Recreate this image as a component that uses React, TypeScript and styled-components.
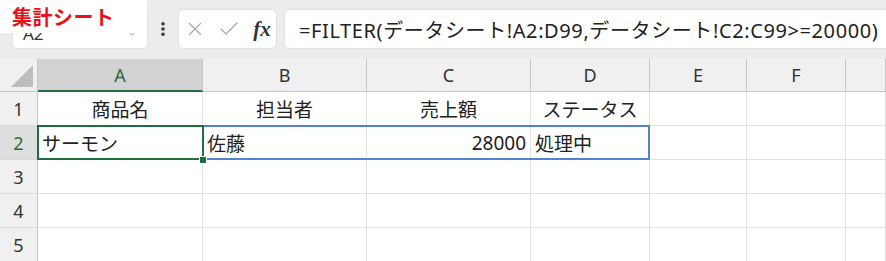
import React from "react";
import styled, { createGlobalStyle, css } from "styled-components";
import { X, Check, ChevronDown, EllipsisVertical } from "lucide-react";

const GlobalStyle = createGlobalStyle`
  html, body {
    margin: 0;
    padding: 0;
    width: 886px;
    height: 261px;
    overflow: hidden;
    background: #ffffff;
  }
  body {
    font-family: "Noto Sans", "Noto Sans CJK JP", sans-serif;
  }
`;

const Page = styled.div`
  position: relative;
  width: 886px;
  height: 261px;
  overflow: hidden;
`;

const SheetLabel = styled.div`
  position: absolute;
  top: 0;
  left: 0;
  width: 135px;
  height: 33px;
  padding-left: 12px;
  background: #ffffff;
  color: #e8101a;
  font-family: "Noto Sans CJK JP", sans-serif;
  font-weight: 700;
  font-size: 20px;
  line-height: 34px;
  letter-spacing: 0.5px;
`;

const Toolbar = styled.div`
  display: flex;
  align-items: flex-start;
  height: 50px;
  padding: 9px 0 0 12px;
  background: #ececec;
`;

const Box = styled.div`
  display: flex;
  align-items: center;
  height: 38px;
  background: #ffffff;
  border: 1px solid #e2e2e2;
  border-radius: 6px;
  flex-shrink: 0;
`;

const NameBox = styled(Box)`
  width: 136px;
  justify-content: space-between;
  padding: 8px 6px 0 10px;
  box-sizing: border-box;
  height: 40px;
  color: #333;
  font-size: 17px;
`;

const Kebab = styled.div`
  width: 30px;
  height: 40px;
  flex-shrink: 0;
  display: flex;
  align-items: center;
  justify-content: center;
  color: #333;
`;

const FxBox = styled(Box)`
  width: 97px;
  justify-content: space-around;
  color: #a6a6a6;
`;

const FxText = styled.span`
  font-family: "Liberation Serif", serif;
  font-style: italic;
  font-weight: 700;
  font-size: 21px;
  color: #333;
  margin-left: 2px;
`;

const FormulaBox = styled(Box)`
  width: 640px;
  margin-left: 7px;
  padding-left: 14px;
  font-size: 20px;
  letter-spacing: 0.6px;
  color: #222;
  white-space: nowrap;
`;

const Grid = styled.div`
  display: grid;
  grid-template-columns: 38px 165px 164px 164px 119px 97px 99px 40px;
  grid-template-rows: 33px repeat(5, 34px);
`;

const HeaderCell = styled.div<{ $selected?: boolean }>`
  display: flex;
  align-items: center;
  justify-content: center;
  background: ${({ $selected }) => ($selected ? "#d2d2d2" : "#f0f0f0")};
  border-right: 1px solid #c6c6c6;
  border-bottom: ${({ $selected }) => ($selected ? "2px solid #1e6e42" : "1px solid #c6c6c6")};
  color: ${({ $selected }) => ($selected ? "#1e6e42" : "#333")};
  font-size: 18px;
  box-sizing: border-box;
`;

const Corner = styled(HeaderCell)`
  position: relative;
  &::after {
    content: "";
    position: absolute;
    right: 4px;
    bottom: 4px;
    width: 0;
    height: 0;
    border-left: 22px solid transparent;
    border-bottom: 22px solid #bdbdbd;
  }
`;

const RowHead = styled.div<{ $selected?: boolean }>`
  display: flex;
  align-items: center;
  justify-content: center;
  background: ${({ $selected }) => ($selected ? "#dedede" : "#f0f0f0")};
  border-right: 1px solid #c6c6c6;
  border-bottom: 1px solid #dcdcdc;
  color: ${({ $selected }) => ($selected ? "#1e6e42" : "#333")};
  font-size: 18px;
  box-sizing: border-box;
`;

type Edge = "top" | "bottom" | "right";

const spillLine = "2px solid #5582cc";

const Cell = styled.div<{ $align?: string; $active?: boolean; $spill?: Edge[] }>`
  position: relative;
  display: flex;
  align-items: center;
  justify-content: ${({ $align }) => $align || "flex-start"};
  padding: 0 4px;
  border-right: 1px solid #e1e1e1;
  border-bottom: 1px solid #e1e1e1;
  box-sizing: border-box;
  font-size: 19px;
  color: #222;
  white-space: nowrap;

  ${({ $spill }) =>
    $spill &&
    css`
      &::before {
        content: "";
        position: absolute;
        left: 0;
        right: -1px;
        top: -1px;
        bottom: -1px;
        border-top: ${$spill.includes("top") ? spillLine : "none"};
        border-bottom: ${$spill.includes("bottom") ? spillLine : "none"};
        border-right: ${$spill.includes("right") ? spillLine : "none"};
        pointer-events: none;
      }
    `}

  ${({ $active }) =>
    $active &&
    css`
      &::before {
        content: "";
        position: absolute;
        left: -1px;
        right: -2px;
        top: -1px;
        bottom: -1px;
        border: 2px solid #1e6e42;
        pointer-events: none;
        z-index: 1;
      }
      &::after {
        content: "";
        position: absolute;
        right: -5px;
        bottom: -5px;
        width: 6px;
        height: 6px;
        background: #1e6e42;
        border: 1px solid #ffffff;
        z-index: 2;
      }
    `}
`;

const columns = ["A", "B", "C", "D", "E", "F", ""];

type CellData = { text?: string; align?: string; active?: boolean; spill?: Edge[] };

const rows: CellData[][] = [
  [
    { text: "商品名", align: "center" },
    { text: "担当者", align: "center" },
    { text: "売上額", align: "center" },
    { text: "ステータス", align: "center" },
    {},
    {},
    {},
  ],
  [
    { text: "サーモン", active: true },
    { text: "佐藤", spill: ["top", "bottom"] },
    { text: "28000", align: "flex-end", spill: ["top", "bottom"] },
    { text: "処理中", spill: ["top", "bottom", "right"] },
    {},
    {},
    {},
  ],
  [{}, {}, {}, {}, {}, {}, {}],
  [{}, {}, {}, {}, {}, {}, {}],
  [{}, {}, {}, {}, {}, {}, {}],
];

export default function App() {
  return (
    <Page>
      <GlobalStyle />
      <Toolbar>
        <NameBox>
          <span>A2</span>
          <ChevronDown size={18} strokeWidth={1.4} color="#b5b5b5" />
        </NameBox>
        <Kebab>
          <EllipsisVertical size={18} strokeWidth={2.8} />
        </Kebab>
        <FxBox>
          <X size={22} strokeWidth={1.3} />
          <Check size={24} strokeWidth={1.3} />
          <FxText>fx</FxText>
        </FxBox>
        <FormulaBox>=FILTER(データシート!A2:D99,データシート!C2:C99&gt;=20000)</FormulaBox>
      </Toolbar>
      <Grid>
        <Corner />
        {columns.map((c) => (
          <HeaderCell key={c || "g"} $selected={c === "A"}>
            {c}
          </HeaderCell>
        ))}
        {rows.map((row, r) => (
          <React.Fragment key={r}>
            <RowHead $selected={r === 1}>{r + 1}</RowHead>
            {row.map((cell, i) => (
              <Cell key={i} $align={cell.align} $active={cell.active} $spill={cell.spill}>
                {cell.text}
              </Cell>
            ))}
          </React.Fragment>
        ))}
      </Grid>
      <SheetLabel>集計シート</SheetLabel>
    </Page>
  );
}
